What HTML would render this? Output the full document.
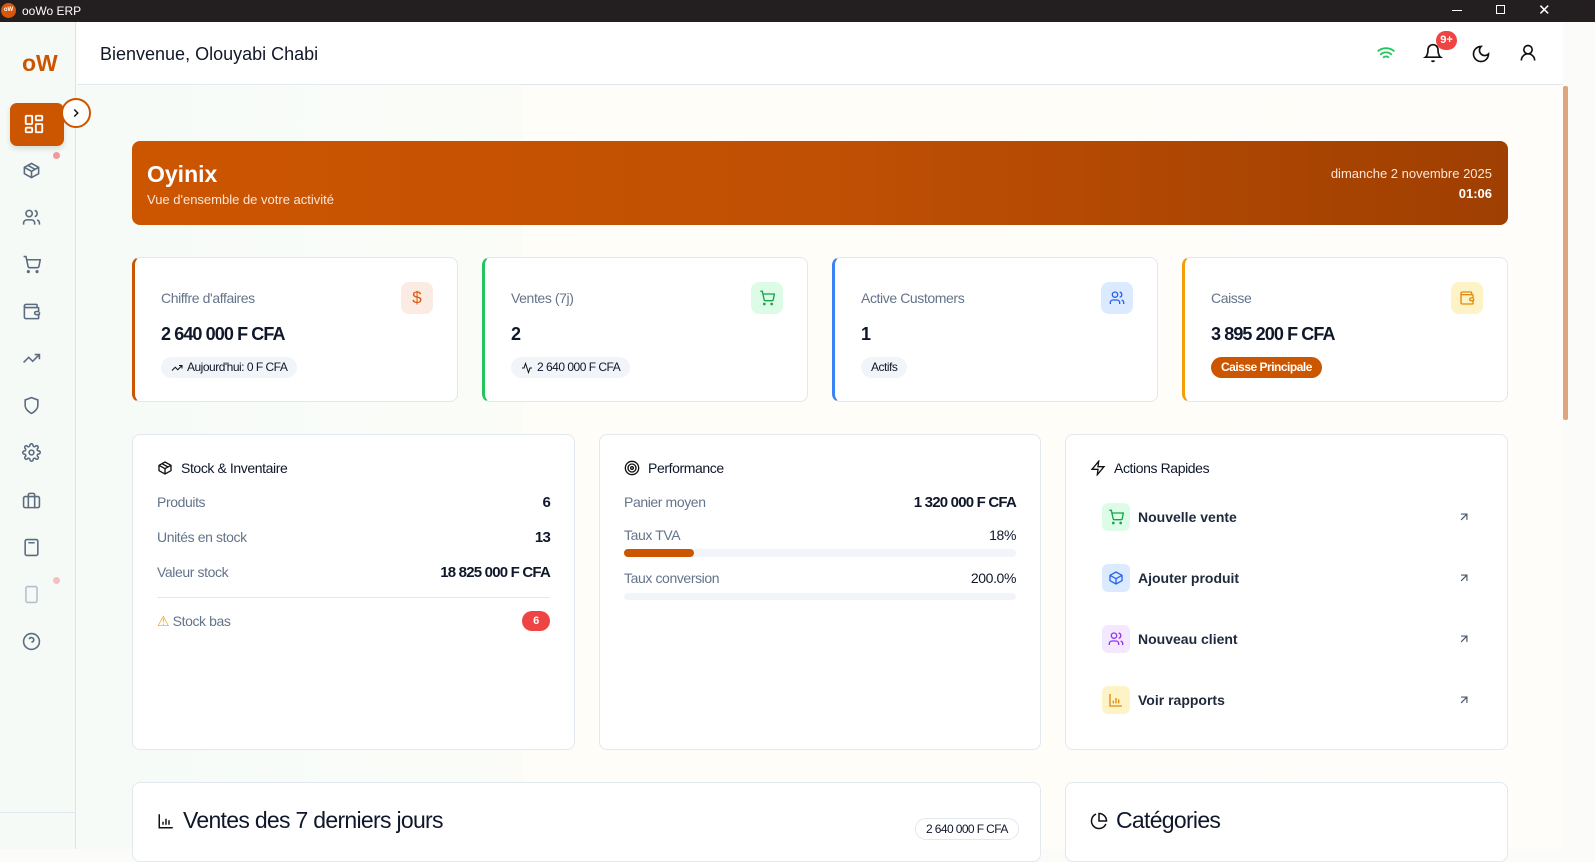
<!DOCTYPE html>
<html><head><meta charset="utf-8"><style>
*{box-sizing:border-box;margin:0;padding:0}
body{width:1595px;height:849px;overflow:hidden;font-family:"Liberation Sans",sans-serif;color:#0f172a;background:#fbfcf9;position:relative}
.abs{position:absolute}
svg{display:block}
.tb{left:0;top:0;width:1595px;height:22px;background:#231f20;color:#fff;font-size:12px}
.side{left:0;top:22px;width:76px;height:827px;background:#f6faf7;border-right:1px solid #dde3ea;z-index:5}
.hdr{left:77px;top:22px;width:1486px;height:63px;background:#fff;border-bottom:1px solid #e2e8f0}
.main{left:77px;top:86px;width:1486px;height:763px;background:linear-gradient(90deg,#f6fbf8 0%,#fbfcf8 30%,#fffdf8 30%,#fffdf9 100%)}
.card{position:absolute;background:#fff;border:1px solid #e2e8f0;border-radius:8px}
.stat{top:257px;width:326px;height:145px}
.lbl{position:absolute;left:26px;top:32px;font-size:14px;color:#64748b;letter-spacing:-.4px}
.val{position:absolute;left:26px;top:66px;font-size:18px;font-weight:bold;letter-spacing:-.9px}
.pill{position:absolute;left:26px;top:99px;height:21px;border-radius:11px;background:#f1f5f9;font-size:12px;padding:0 10px;line-height:21px;letter-spacing:-.5px;display:flex;align-items:center;gap:4px}
.ic{position:absolute;right:24px;top:24px;width:32px;height:32px;border-radius:8px;display:flex;align-items:center;justify-content:center}
.ph{position:absolute;left:24px;top:25px;font-size:14px;display:flex;gap:8px;align-items:center;letter-spacing:-.4px}
.row{position:absolute;left:24px;right:24px;display:flex;justify-content:space-between;font-size:14px;color:#64748b;letter-spacing:-.4px}
.row b{color:#0f172a;font-size:15px;letter-spacing:-.8px}
.si{position:absolute;left:22px}
.act{position:absolute;left:36px;right:36px;height:28px;display:flex;align-items:center;font-size:14px;font-weight:bold;color:#1e293b}
.act .bx{width:28px;height:28px;border-radius:6px;display:flex;align-items:center;justify-content:center;margin-right:8px}
.act .ar{margin-left:auto}
</style></head><body>
<div class="abs tb"><div class="abs" style="left:1px;top:3px;width:15px;height:15px;border-radius:50%;background:#d9570a;font-size:6px;line-height:15px;text-align:center;font-weight:bold">oW</div><div class="abs" style="left:22px;top:4px">ooWo ERP</div>
<div class="abs" style="left:1452px;top:10px;width:10px;height:1px;background:#fff"></div>
<div class="abs" style="left:1496px;top:5px;width:9px;height:9px;border:1px solid #fff"></div>
<div class="abs" style="left:1538px;top:1px;font-size:15px">✕</div></div>

<div class="abs side">
<div class="abs" style="left:22px;top:28px;font-size:23px;font-weight:bold;color:#cc5500">oW</div>
<div class="abs" style="left:10px;top:81px;width:54px;height:43px;border-radius:7px;background:#cc5500;box-shadow:0 3px 6px rgba(0,0,0,.12)"><svg class="abs" style="left:13px;top:10px" width="22" height="22" viewBox="0 0 24 24" fill="none" stroke="#fff" stroke-width="2"><rect x="3" y="3" width="7" height="9" rx="1"/><rect x="14" y="3" width="7" height="5" rx="1"/><rect x="14" y="12" width="7" height="9" rx="1"/><rect x="3" y="16" width="7" height="5" rx="1"/></svg></div>
<div class="abs" style="left:61px;top:76px;width:30px;height:30px;border-radius:50%;background:#fff;border:2px solid #cc5500;display:flex;align-items:center;justify-content:center"><svg width="14" height="14" viewBox="0 0 24 24" fill="none" stroke="#111" stroke-width="2.5"><path d="M9 6l6 6-6 6"/></svg></div>
<div class="abs" style="left:53px;top:130px;width:7px;height:7px;border-radius:50%;background:#f29a9a"></div>
<div class="abs" style="left:53px;top:555px;width:7px;height:7px;border-radius:50%;background:#f5c0c0"></div>
<svg class="si" style="top:139px" width="19" height="19" viewBox="0 0 24 24" fill="none" stroke="#5b6b80" stroke-width="2"><path d="M21 8 12 3 3 8v8l9 5 9-5z"/><path d="M3 8l9 5 9-5M12 13v8M7.5 5.5l9 5"/></svg>
<svg class="si" style="top:186px" width="19" height="19" viewBox="0 0 24 24" fill="none" stroke="#5b6b80" stroke-width="2"><circle cx="9" cy="7" r="4"/><path d="M2 21v-2a4 4 0 0 1 4-4h6a4 4 0 0 1 4 4v2M16 3.1a4 4 0 0 1 0 7.8M22 21v-2a4 4 0 0 0-3-3.9"/></svg>
<svg class="si" style="top:233px" width="19" height="19" viewBox="0 0 24 24" fill="none" stroke="#5b6b80" stroke-width="2"><circle cx="8" cy="21" r="1"/><circle cx="19" cy="21" r="1"/><path d="M2 2h3l2.7 12.4a2 2 0 0 0 2 1.6h9.7a2 2 0 0 0 2-1.6L23 6H6"/></svg>
<svg class="si" style="top:280px" width="19" height="19" viewBox="0 0 24 24" fill="none" stroke="#5b6b80" stroke-width="2"><path d="M19 7V4a1 1 0 0 0-1-1H5a2 2 0 0 0 0 4h15a1 1 0 0 1 1 1v4h-3a2 2 0 0 0 0 4h3a1 1 0 0 0 1-1v-2"/><path d="M3 5v14a2 2 0 0 0 2 2h15a1 1 0 0 0 1-1v-4"/></svg>
<svg class="si" style="top:327px" width="19" height="19" viewBox="0 0 24 24" fill="none" stroke="#5b6b80" stroke-width="2"><path d="M22 7l-8.5 8.5-5-5L2 17M16 7h6v6"/></svg>
<svg class="si" style="top:374px" width="19" height="19" viewBox="0 0 24 24" fill="none" stroke="#5b6b80" stroke-width="2"><path d="M12 22s8-4 8-10V5l-8-3-8 3v7c0 6 8 10 8 10z"/></svg>
<svg class="si" style="top:421px" width="19" height="19" viewBox="0 0 24 24" fill="none" stroke="#5b6b80" stroke-width="2"><circle cx="12" cy="12" r="3"/><path d="M19.4 15a1.7 1.7 0 0 0 .3 1.8l.1.1a2 2 0 1 1-2.8 2.8l-.1-.1a1.7 1.7 0 0 0-2.8 1.2V21a2 2 0 0 1-4 0v-.1A1.7 1.7 0 0 0 9 19.4a1.7 1.7 0 0 0-1.8.3l-.1.1a2 2 0 1 1-2.8-2.8l.1-.1a1.7 1.7 0 0 0-1.2-2.8H3a2 2 0 0 1 0-4h.1A1.7 1.7 0 0 0 4.6 9a1.7 1.7 0 0 0-.3-1.8l-.1-.1a2 2 0 1 1 2.8-2.8l.1.1a1.7 1.7 0 0 0 2.8-1.2V3a2 2 0 0 1 4 0v.1a1.7 1.7 0 0 0 2.8 1.2l.1-.1a2 2 0 1 1 2.8 2.8l-.1.1a1.7 1.7 0 0 0 1.2 2.8H21a2 2 0 0 1 0 4h-.1a1.7 1.7 0 0 0-1.5 1.1z"/></svg>
<svg class="si" style="top:469px" width="19" height="19" viewBox="0 0 24 24" fill="none" stroke="#5b6b80" stroke-width="2"><rect x="2" y="7" width="20" height="14" rx="2"/><path d="M16 21V5a2 2 0 0 0-2-2h-4a2 2 0 0 0-2 2v16"/></svg>
<svg class="si" style="top:516px" width="19" height="19" viewBox="0 0 24 24" fill="none" stroke="#5b6b80" stroke-width="2"><rect x="4" y="2" width="16" height="20" rx="2"/><path d="M8 6h8M8 11h.01M12 11h.01M16 11h.01M8 15h.01M12 15h.01M16 15h.01M8 18h.01M12 18h.01M16 18h.01"/></svg>
<svg class="si" style="top:563px" width="19" height="19" viewBox="0 0 24 24" fill="none" stroke="#b6c0cc" stroke-width="2"><rect x="5" y="2" width="14" height="20" rx="2"/><path d="M12 18h.01"/></svg>
<svg class="si" style="top:610px" width="19" height="19" viewBox="0 0 24 24" fill="none" stroke="#5b6b80" stroke-width="2"><circle cx="12" cy="12" r="10"/><path d="M9.1 9a3 3 0 0 1 5.8 1c0 2-3 3-3 3M12 17h.01"/></svg>
<div class="abs" style="left:0;top:790px;width:76px;height:1px;background:#e2e8f0"></div>
</div>

<div class="abs hdr">
<div class="abs" style="left:23px;top:22px;font-size:18px;color:#111827">Bienvenue, Olouyabi Chabi</div>
<svg class="abs" style="left:1299px;top:22px" width="20" height="20" viewBox="0 0 24 24" fill="none" stroke="#22c55e" stroke-width="2.2"><path d="M2 8.8a15 15 0 0 1 20 0M5 12.9a10 10 0 0 1 14 0M8.5 16.4a5 5 0 0 1 7 0M12 20h.01"/></svg>
<svg class="abs" style="left:1346px;top:21px" width="20" height="20" viewBox="0 0 24 24" fill="none" stroke="#111" stroke-width="2"><path d="M6 8a6 6 0 0 1 12 0c0 7 3 9 3 9H3s3-2 3-9M10.3 21a1.9 1.9 0 0 0 3.4 0"/></svg>
<div class="abs" style="left:1359px;top:9px;width:21px;height:19px;border-radius:10px;background:#ef4444;color:#fff;font-size:11px;font-weight:bold;text-align:center;line-height:19px">9+</div>
<svg class="abs" style="left:1394px;top:22px" width="20" height="20" viewBox="0 0 24 24" fill="none" stroke="#111" stroke-width="2"><path d="M12 3a6 6 0 0 0 9 9 9 9 0 1 1-9-9z"/></svg>
<svg class="abs" style="left:1441px;top:21px" width="20" height="20" viewBox="0 0 24 24" fill="none" stroke="#111" stroke-width="2"><circle cx="12" cy="8" r="5"/><path d="M20 21a8 8 0 0 0-16 0"/></svg>
</div>

<div class="abs main"></div>
<div class="abs" style="left:1563px;top:86px;width:5px;height:334px;background:#e0a57d;border-radius:2px"></div>

<div class="abs" style="left:132px;top:141px;width:1376px;height:84px;border-radius:8px;background:linear-gradient(90deg,#cc5500,#c05004 50%,#9f3f02);color:#fff">
<div class="abs" style="left:15px;top:20px;font-size:23px;font-weight:bold">Oyinix</div>
<div class="abs" style="left:15px;top:51px;font-size:13px;color:#fbe6d8">Vue d'ensemble de votre activité</div>
<div class="abs" style="right:16px;top:25px;font-size:13px;color:#fbe6d8;text-align:right">dimanche 2 novembre 2025</div>
<div class="abs" style="right:16px;top:45px;font-size:13px;font-weight:bold;text-align:right">01:06</div>
</div>

<div class="card stat" style="left:132px;border-left:3px solid #cc5500">
<div class="lbl">Chiffre d'affaires</div><div class="ic" style="background:#fbebe2;color:#d9570a;font-size:17px">$</div>
<div class="val">2 640 000 F CFA</div>
<div class="pill"><svg width="12" height="12" viewBox="0 0 24 24" fill="none" stroke="#111" stroke-width="2"><path d="M22 7l-8.5 8.5-5-5L2 17M16 7h6v6"/></svg>Aujourd'hui: 0 F CFA</div></div>
<div class="card stat" style="left:482px;border-left:3px solid #22c55e">
<div class="lbl">Ventes (7j)</div><div class="ic" style="background:#dcfce7"><svg width="16" height="16" viewBox="0 0 24 24" fill="none" stroke="#16a34a" stroke-width="2"><circle cx="8" cy="21" r="1"/><circle cx="19" cy="21" r="1"/><path d="M2 2h3l2.7 12.4a2 2 0 0 0 2 1.6h9.7a2 2 0 0 0 2-1.6L23 6H6"/></svg></div>
<div class="val">2</div>
<div class="pill"><svg width="12" height="12" viewBox="0 0 24 24" fill="none" stroke="#111" stroke-width="2"><path d="M22 12h-4l-3 9L9 3l-3 9H2"/></svg>2 640 000 F CFA</div></div>
<div class="card stat" style="left:832px;border-left:3px solid #3b82f6">
<div class="lbl">Active Customers</div><div class="ic" style="background:#dbeafe"><svg width="16" height="16" viewBox="0 0 24 24" fill="none" stroke="#2563eb" stroke-width="2"><circle cx="9" cy="7" r="4"/><path d="M2 21v-2a4 4 0 0 1 4-4h6a4 4 0 0 1 4 4v2M16 3.1a4 4 0 0 1 0 7.8M22 21v-2a4 4 0 0 0-3-3.9"/></svg></div>
<div class="val">1</div>
<div class="pill">Actifs</div></div>
<div class="card stat" style="left:1182px;border-left:3px solid #f59e0b">
<div class="lbl">Caisse</div><div class="ic" style="background:#fef3c7"><svg width="16" height="16" viewBox="0 0 24 24" fill="none" stroke="#e08a10" stroke-width="2"><path d="M19 7V4a1 1 0 0 0-1-1H5a2 2 0 0 0 0 4h15a1 1 0 0 1 1 1v4h-3a2 2 0 0 0 0 4h3a1 1 0 0 0 1-1v-2"/><path d="M3 5v14a2 2 0 0 0 2 2h15a1 1 0 0 0 1-1v-4"/></svg></div>
<div class="val">3 895 200 F CFA</div>
<div class="pill" style="background:#cc5500;color:#fff;font-weight:bold">Caisse Principale</div></div>

<div class="card" style="left:132px;top:434px;width:443px;height:316px">
<div class="ph"><svg width="16" height="16" viewBox="0 0 24 24" fill="none" stroke="#111" stroke-width="2"><path d="M21 8 12 3 3 8v8l9 5 9-5z"/><path d="M3 8l9 5 9-5M12 13v8M7.5 5.5l9 5"/></svg>Stock &amp; Inventaire</div>
<div class="row" style="top:59px">Produits<b>6</b></div>
<div class="row" style="top:94px">Unités en stock<b>13</b></div>
<div class="row" style="top:129px">Valeur stock<b>18 825 000 F CFA</b></div>
<div class="abs" style="left:24px;right:24px;top:162px;height:1px;background:#e2e8f0"></div>
<div class="row" style="top:176px;align-items:center"><span><span style="color:#f59e0b">⚠</span> Stock bas</span><span style="background:#ef4444;color:#fff;font-size:11px;font-weight:bold;width:28px;height:20px;border-radius:10px;text-align:center;line-height:20px">6</span></div>
</div>

<div class="card" style="left:599px;top:434px;width:442px;height:316px">
<div class="ph"><svg width="16" height="16" viewBox="0 0 24 24" fill="none" stroke="#111" stroke-width="2"><circle cx="12" cy="12" r="10"/><circle cx="12" cy="12" r="6"/><circle cx="12" cy="12" r="2"/></svg>Performance</div>
<div class="row" style="top:59px">Panier moyen<b>1 320 000 F CFA</b></div>
<div class="row" style="top:92px">Taux TVA<span style="color:#0f172a">18%</span></div>
<div class="abs" style="left:24px;right:24px;top:114px;height:8px;border-radius:4px;background:#f1f5f9"><div style="width:70px;height:8px;border-radius:4px;background:#cc5500"></div></div>
<div class="row" style="top:135px">Taux conversion<span style="color:#0f172a">200.0%</span></div>
<div class="abs" style="left:24px;right:24px;top:158px;height:7px;border-radius:4px;background:#f1f5f9"></div>
</div>

<div class="card" style="left:1065px;top:434px;width:443px;height:316px">
<div class="ph"><svg width="16" height="16" viewBox="0 0 24 24" fill="none" stroke="#111" stroke-width="2"><path d="M13 2 3 14h9l-1 8 10-12h-9z"/></svg>Actions Rapides</div>
<div class="act" style="top:68px"><div class="bx" style="background:#dcfce7"><svg width="16" height="16" viewBox="0 0 24 24" fill="none" stroke="#16a34a" stroke-width="2"><circle cx="8" cy="21" r="1"/><circle cx="19" cy="21" r="1"/><path d="M2 2h3l2.7 12.4a2 2 0 0 0 2 1.6h9.7a2 2 0 0 0 2-1.6L23 6H6"/></svg></div>Nouvelle vente<span class="ar"><svg width="14" height="14" viewBox="0 0 24 24" fill="none" stroke="#475569" stroke-width="2"><path d="M7 17 17 7M7 7h10v10"/></svg></span></div>
<div class="act" style="top:129px"><div class="bx" style="background:#dbeafe"><svg width="16" height="16" viewBox="0 0 24 24" fill="none" stroke="#2563eb" stroke-width="2"><path d="M21 8 12 3 3 8v8l9 5 9-5z"/><path d="M3 8l9 5 9-5M12 13v8"/></svg></div>Ajouter produit<span class="ar"><svg width="14" height="14" viewBox="0 0 24 24" fill="none" stroke="#475569" stroke-width="2"><path d="M7 17 17 7M7 7h10v10"/></svg></span></div>
<div class="act" style="top:190px"><div class="bx" style="background:#f3e8ff"><svg width="16" height="16" viewBox="0 0 24 24" fill="none" stroke="#9333ea" stroke-width="2"><circle cx="9" cy="7" r="4"/><path d="M2 21v-2a4 4 0 0 1 4-4h6a4 4 0 0 1 4 4v2M16 3.1a4 4 0 0 1 0 7.8M22 21v-2a4 4 0 0 0-3-3.9"/></svg></div>Nouveau client<span class="ar"><svg width="14" height="14" viewBox="0 0 24 24" fill="none" stroke="#475569" stroke-width="2"><path d="M7 17 17 7M7 7h10v10"/></svg></span></div>
<div class="act" style="top:251px"><div class="bx" style="background:#fef3c7"><svg width="16" height="16" viewBox="0 0 24 24" fill="none" stroke="#e08a10" stroke-width="2"><path d="M3 3v18h18M8 17v-4M12 17V9M16 17v-6"/></svg></div>Voir rapports<span class="ar"><svg width="14" height="14" viewBox="0 0 24 24" fill="none" stroke="#475569" stroke-width="2"><path d="M7 17 17 7M7 7h10v10"/></svg></span></div>
</div>

<div class="card" style="left:132px;top:782px;width:909px;height:80px">
<div class="abs" style="left:24px;top:24px;font-size:23px;display:flex;align-items:center;gap:8px;letter-spacing:-.7px"><svg width="18" height="18" viewBox="0 0 24 24" fill="none" stroke="#111" stroke-width="2"><path d="M3 3v18h18M8 17v-4M12 17V9M16 17v-6"/></svg>Ventes des 7 derniers jours</div>
<div class="abs" style="left:782px;top:35px;height:22px;border:1px solid #e2e8f0;border-radius:11px;padding:0 10px;font-size:12px;line-height:20px;letter-spacing:-.6px">2 640 000 F CFA</div>
</div>
<div class="card" style="left:1065px;top:782px;width:443px;height:80px">
<div class="abs" style="left:24px;top:24px;font-size:23px;display:flex;align-items:center;gap:8px;letter-spacing:-.7px"><svg width="18" height="18" viewBox="0 0 24 24" fill="none" stroke="#111" stroke-width="2"><path d="M21.2 15.9A10 10 0 1 1 8 2.8"/><path d="M22 12A10 10 0 0 0 12 2v10z"/></svg>Catégories</div>
</div>
</body></html>
